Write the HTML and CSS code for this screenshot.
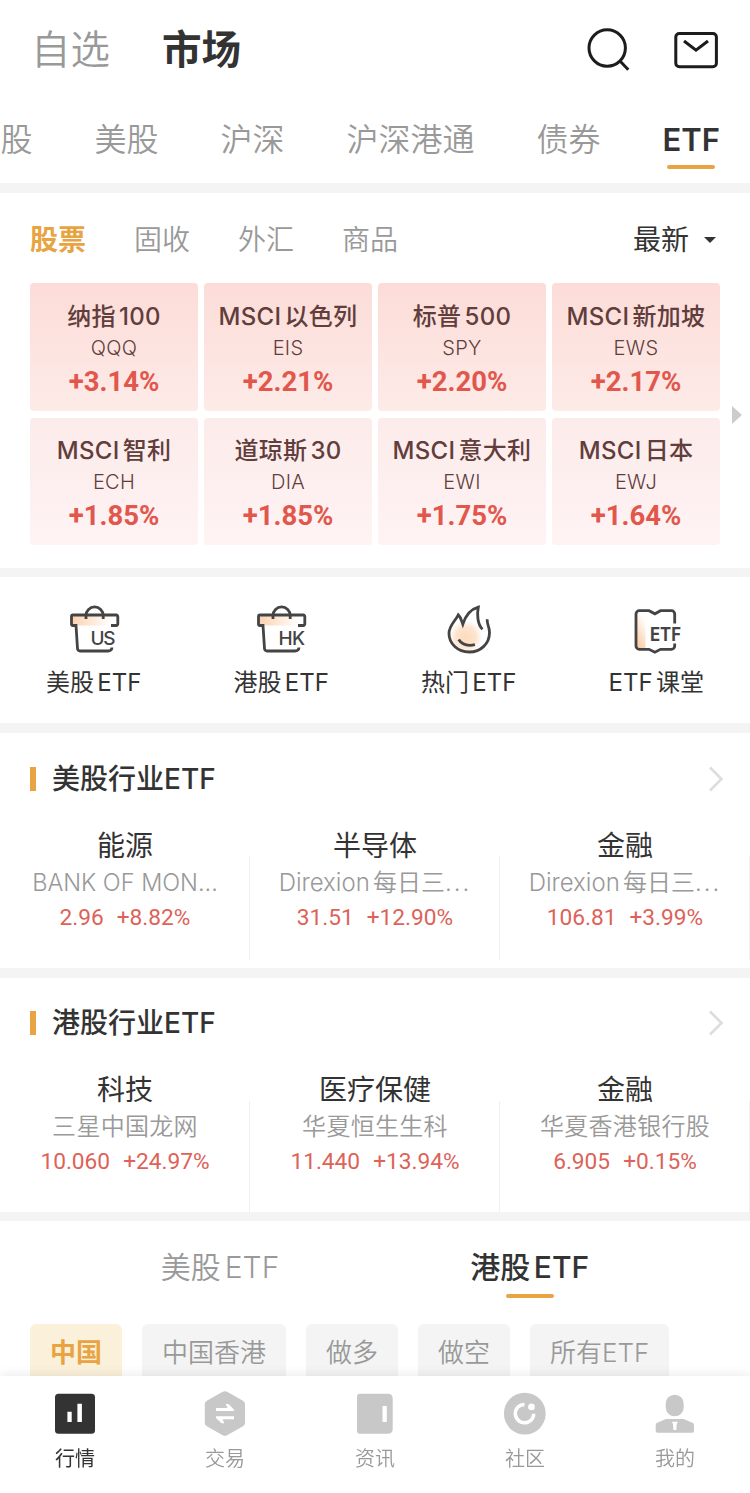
FILE: index.html
```html
<!DOCTYPE html>
<html lang="zh-CN">
<head>
  <meta charset="UTF-8">
  <meta name="viewport" content="width=device-width, initial-scale=1.0">
  <title>市场 - ETF</title>
  <link rel="stylesheet" href="styles.css">
</head>
<body>
  <div class="app">
    <header class="header">
      <div class="header-titles">
        <span class="header-title">自选</span>
        <span class="header-title active">市场</span>
      </div>
      <div class="header-icons">
        <svg width="46" height="46" viewBox="0 0 46 46" fill="none" stroke="#1c1c1c" stroke-width="3">
          <circle cx="22.2" cy="21" r="18.2"/>
          <path d="M34.5 33.5L43.3 42.7"/>
        </svg>
        <svg width="46" height="46" viewBox="0 0 46 46" fill="none" stroke="#1c1c1c" stroke-width="3">
          <rect x="2.8" y="6.5" width="40.6" height="33.2" rx="3.5"/>
          <path d="M11 14L23 23.2L35 14"/>
        </svg>
      </div>
    </header>

    <nav class="market-tabs">
      <span class="market-tab">股</span>
      <span class="market-tab">美股</span>
      <span class="market-tab">沪深</span>
      <span class="market-tab">沪深港通</span>
      <span class="market-tab">债券</span>
      <span class="market-tab active">ETF</span>
    </nav>

    <section class="heatmap">
      <div class="filters">
        <span class="filter active">股票</span>
        <span class="filter">固收</span>
        <span class="filter">外汇</span>
        <span class="filter">商品</span>
        <span class="sort">最新<i class="caret"></i></span>
      </div>
      <div class="tiles">
        <div class="tile hot"><div class="tile-name">纳指 100</div><div class="tile-code">QQQ</div><div class="tile-change">+3.14%</div></div>
        <div class="tile hot"><div class="tile-name">MSCI 以色列</div><div class="tile-code">EIS</div><div class="tile-change">+2.21%</div></div>
        <div class="tile hot"><div class="tile-name">标普 500</div><div class="tile-code">SPY</div><div class="tile-change">+2.20%</div></div>
        <div class="tile hot"><div class="tile-name">MSCI 新加坡</div><div class="tile-code">EWS</div><div class="tile-change">+2.17%</div></div>
        <div class="tile"><div class="tile-name">MSCI 智利</div><div class="tile-code">ECH</div><div class="tile-change">+1.85%</div></div>
        <div class="tile"><div class="tile-name">道琼斯 30</div><div class="tile-code">DIA</div><div class="tile-change">+1.85%</div></div>
        <div class="tile"><div class="tile-name">MSCI 意大利</div><div class="tile-code">EWI</div><div class="tile-change">+1.75%</div></div>
        <div class="tile"><div class="tile-name">MSCI 日本</div><div class="tile-code">EWJ</div><div class="tile-change">+1.64%</div></div>
      </div>
      <i class="next-page"></i>
    </section>

    <section class="shortcuts">
      <div class="shortcut">
        <svg width="52" height="52" viewBox="0 0 52 52" fill="none" stroke="#444" stroke-width="2.8">
          <defs>
            <linearGradient id="rim"><stop offset="0" stop-color="#fcd2b0"/><stop offset="1" stop-color="#fff"/></linearGradient>
          </defs>
          <path d="M4 12h40v9.500h-40z" fill="url(#rim)" stroke="none"/>
          <path d="M43 21.500h5.300a1.500 1.500 0 0 0 1.500-1.500v-7.500a1.500 1.500 0 0 0-1.500-1.500H5a1.500 1.500 0 0 0-1.500 1.500V20a1.500 1.500 0 0 0 1.500 1.500h3L9.500 44.500a2.500 2.500 0 0 0 2.500 2.500H40c2.500 0 3.800-1.200 4-3.500"/>
          <path d="M18 15v-3.500a8.600 8.600 0 0 1 17.200 0V15"/>
          <text class="icon-text" x="22.500" y="40.500" textLength="25">US</text>
        </svg>
        <span>美股 ETF</span>
      </div>
      <div class="shortcut">
        <svg width="52" height="52" viewBox="0 0 52 52" fill="none" stroke="#444" stroke-width="2.8">
          <path d="M4 12h40v9.500h-40z" fill="url(#rim)" stroke="none"/>
          <path d="M43 21.500h5.300a1.500 1.500 0 0 0 1.500-1.500v-7.500a1.500 1.500 0 0 0-1.500-1.500H5a1.500 1.500 0 0 0-1.500 1.500V20a1.500 1.500 0 0 0 1.500 1.500h3L9.500 44.500a2.500 2.500 0 0 0 2.500 2.500H40c2.500 0 3.800-1.200 4-3.500"/>
          <path d="M18 15v-3.500a8.600 8.600 0 0 1 17.200 0V15"/>
          <text class="icon-text" x="23.500" y="40.500" textLength="26.500">HK</text>
        </svg>
        <span>港股 ETF</span>
      </div>
      <div class="shortcut">
        <svg width="52" height="52" viewBox="0 0 52 52" fill="none" stroke="#444" stroke-width="2.8">
          <defs>
            <radialGradient id="glow" cx=".45" cy=".55"><stop offset="0" stop-color="#fcdcbe"/><stop offset=".6" stop-color="#fde4ce"/><stop offset="1" stop-color="#fff"/></radialGradient>
          </defs>
          <circle cx="24.500" cy="31.500" r="16.500" fill="url(#glow)" stroke="none"/>
          <path d="M44.300 15.300C43.500 20 46.500 22 46.500 28.500C46.500 39.500 38 48 26.300 48C14.500 48 6 39.500 6 29.500C6 21.500 12 17.500 15.300 10.800C18 13.500 18.500 16.500 19.800 20.200C22.500 12 27 5.500 35.300 3.200C33.800 10 34.500 20.500 39.500 25.300"/>
          <path d="M15.700 35.500C18.500 40 24.500 42.300 31.900 40.700"/>
        </svg>
        <span>热门 ETF</span>
      </div>
      <div class="shortcut">
        <svg width="52" height="52" viewBox="0 0 52 52" fill="none" stroke="#444" stroke-width="2.8">
          <defs>
            <linearGradient id="page" x1="0" y1="1" x2=".4" y2="0"><stop offset="0" stop-color="#fbc79b"/><stop offset="1" stop-color="#fff"/></linearGradient>
          </defs>
          <path d="M7 8h8.500v36h-8.500z" fill="url(#page)" stroke="none"/>
          <path d="M44.700 19.500V10a3.300 3.300 0 0 0-3.300-3.300H30.500L24.900 9.800L19 6.700H9.300A3.300 3.300 0 0 0 6 10V42a3.300 3.300 0 0 0 3.300 3.300H19L24.900 48.200L30.500 45.300H41.400A3.300 3.300 0 0 0 44.700 42V39.500"/>
          <text class="icon-text bold" x="20" y="36.800" textLength="31" lengthAdjust="spacingAndGlyphs">ETF</text>
        </svg>
        <span>ETF 课堂</span>
      </div>
    </section>

    <section class="sector">
      <div class="sector-head">
        <h2>美股行业ETF</h2>
        <svg width="16" height="26" viewBox="0 0 16 26" fill="none" stroke="#ddd" stroke-width="2.6"><path d="M2 1.500L13.500 13L2 24.500"/></svg>
      </div>
      <div class="sector-list">
        <div class="sector-item">
          <div class="sector-name">能源</div>
          <div class="sector-fund latin">BANK OF MON...</div>
          <div class="sector-price"><span>2.96</span><span>+8.82%</span></div>
        </div>
        <div class="sector-item">
          <div class="sector-name">半导体</div>
          <div class="sector-fund mixed">Direxion 每日三<span class="dots">...</span></div>
          <div class="sector-price"><span>31.51</span><span>+12.90%</span></div>
        </div>
        <div class="sector-item">
          <div class="sector-name">金融</div>
          <div class="sector-fund mixed">Direxion 每日三<span class="dots">...</span></div>
          <div class="sector-price"><span>106.81</span><span>+3.99%</span></div>
        </div>
      </div>
    </section>

    <section class="sector">
      <div class="sector-head">
        <h2>港股行业ETF</h2>
        <svg width="16" height="26" viewBox="0 0 16 26" fill="none" stroke="#ddd" stroke-width="2.6"><path d="M2 1.500L13.500 13L2 24.500"/></svg>
      </div>
      <div class="sector-list">
        <div class="sector-item">
          <div class="sector-name">科技</div>
          <div class="sector-fund">三星中国龙网</div>
          <div class="sector-price"><span>10.060</span><span>+24.97%</span></div>
        </div>
        <div class="sector-item">
          <div class="sector-name">医疗保健</div>
          <div class="sector-fund">华夏恒生生科</div>
          <div class="sector-price"><span>11.440</span><span>+13.94%</span></div>
        </div>
        <div class="sector-item">
          <div class="sector-name">金融</div>
          <div class="sector-fund">华夏香港银行股</div>
          <div class="sector-price"><span>6.905</span><span>+0.15%</span></div>
        </div>
      </div>
    </section>

    <section class="etf-list">
      <div class="etf-tabs">
        <span class="etf-tab">美股 ETF</span>
        <span class="etf-tab active">港股 ETF</span>
      </div>
      <div class="chips">
        <span class="chip active">中国</span>
        <span class="chip">中国香港</span>
        <span class="chip">做多</span>
        <span class="chip">做空</span>
        <span class="chip">所有ETF</span>
      </div>
    </section>

    <nav class="tabbar">
      <div class="tabbar-item active">
        <svg width="46" height="46" viewBox="0 0 46 46" fill="#333">
          <rect x="3" y="2.700" width="40" height="40" rx="3.500"/>
          <path d="M15.400 20.700h4.300V31h-4.300zM25.400 12.700h4.500V31h-4.500z" fill="#fff"/>
        </svg>
        <span>行情</span>
      </div>
      <div class="tabbar-item">
        <svg width="46" height="46" viewBox="0 0 46 46" fill="#c8c8c8">
          <path d="M20.700 .8Q22.900 -.5 25.100 .8L41 9.700Q43 10.900 43 13.200V31.800Q43 34.100 41 35.300L25.100 44.200Q22.900 45.500 20.700 44.200L4.800 35.300Q2.800 34.100 2.800 31.800V13.200Q2.800 10.900 4.800 9.700Z"/>
          <path d="M14 17h11.500l-1.800-4h2.800l5.500 5.500V20H14zM32 28.300H20.500l1.800 4h-2.800L14 27v-1.700h18z" fill="#fff"/>
        </svg>
        <span>交易</span>
      </div>
      <div class="tabbar-item">
        <svg width="46" height="46" viewBox="0 0 46 46" fill="#c8c8c8">
          <path d="M8 2.700H36q4.700 0 4.700 4.700V38q0 4.700-4.700 4.700H8q-3 0-3-3V5.700q0-3 3-3z"/>
          <path d="M30.500 15h4.300v16h-4.300z" fill="#fff"/>
        </svg>
        <span>资讯</span>
      </div>
      <div class="tabbar-item">
        <svg width="46" height="46" viewBox="0 0 46 46" fill="#c8c8c8">
          <circle cx="22.800" cy="22.600" r="20.900"/>
          <path d="M22.500 13.400A9.200 9.200 0 1 0 31.700 22.700" fill="none" stroke="#fff" stroke-width="3.500"/>
          <circle cx="29.500" cy="15.900" r="3.300" fill="#fff"/>
        </svg>
        <span>社区</span>
      </div>
      <div class="tabbar-item">
        <svg width="46" height="46" viewBox="0 0 46 46" fill="#c8c8c8">
          <rect x="13.700" y="3.700" width="18" height="21.600" rx="9"/>
          <path d="M14 28h17.500l9.500 4q1 .5 1 2v6q0 1.700-1.700 1.700H5.400Q3.700 41.700 3.700 40v-6q0-1.500 1-2z"/>
          <path d="M19.700 30.700h6.300l-1.300 2.300l-.4 6h-2.900l-.4-6z" fill="#fff"/>
        </svg>
        <span>我的</span>
      </div>
    </nav>
  </div>
</body>
</html>
```
FILE: styles.css
```css
* {
  box-sizing: border-box;
}

body {
  margin: 0;
  font-family: Inter, "Noto Sans CJK SC", sans-serif;
  color: #333;
  background-color: #fff;
  white-space: nowrap;
}

svg {
  display: block;
  flex: none;
}

.app {
  width: 750px;
  height: 1493px;
  overflow: hidden;
}

/* Header */
.header {
  display: flex;
  justify-content: space-between;
  height: 100px;
  padding: 20px 31px 0 31px;
}

.header-titles {
  display: flex;
  gap: 52px;
}

.header-title {
  font-size: 39.5px;
  line-height: 60px;
  color: #999;
  font-weight: 350;
}

.header-title.active {
  color: #333;
  font-weight: 700;
}

.header-icons {
  display: flex;
  gap: 42px;
  padding-top: 7px;
}

/* Market tabs */
.market-tabs {
  display: flex;
  justify-content: flex-end;
  gap: 62px;
  height: 93px;
  padding: 16px 30px 0 0;
  border-bottom: 10px solid #f4f4f4;
}

.market-tab {
  display: flex;
  flex-direction: column;
  align-items: center;
  font-size: 32px;
  line-height: 48px;
  color: #999;
  font-weight: 350;
}

.market-tab.active {
  font-size: 31px;
  color: #333;
  font-weight: 600;
}

.market-tab.active::after,
.etf-tab.active::after {
  content: "";
  width: 48px;
  height: 4px;
  border-radius: 2px;
  background-color: #e8a442;
}

.market-tab.active::after {
  margin-top: 1px;
}

/* Heatmap */
.heatmap {
  position: relative;
  height: 384px;
  padding: 23px 30px 0;
  border-bottom: 9px solid #f4f4f4;
}

.filters {
  display: flex;
  gap: 48px;
  height: 67px;
  font-size: 28px;
  line-height: 48px;
}

.filter {
  color: #999;
  font-weight: 350;
}

.filter.active {
  color: #e8a442;
  font-weight: 600;
}

.sort {
  display: flex;
  align-items: center;
  gap: 15px;
  height: 48px;
  margin-left: auto;
  padding-right: 4px;
}

.caret {
  border: 6px solid transparent;
  border-top-color: #333;
  border-bottom: 0;
}

.tiles {
  display: grid;
  grid-template-columns: repeat(4, 168px);
  gap: 7px 6px;
}

.tile {
  height: 127px;
  padding-top: 16px;
  border-radius: 4px;
  text-align: center;
  color: #613d3b;
  background: linear-gradient(#fcebeb, #fff3f3);
}

.tile.hot {
  height: 128px;
  padding-top: 17px;
  background: linear-gradient(#fcdcd8, #fdebe8);
}

.tile-name {
  font-size: 24px;
  line-height: 34px;
  font-weight: 500;
  word-spacing: -3.5px;
  letter-spacing: 0.3px;
}

.tile-code {
  font-size: 20px;
  line-height: 29px;
  font-weight: 350;
  letter-spacing: 0.3px;
}

.tile-change {
  font-family: Roboto, sans-serif;
  font-size: 27.5px;
  line-height: 37px;
  font-weight: 700;
  color: #e2574c;
}

.next-page {
  position: absolute;
  right: 8px;
  top: 213px;
  border: 9px solid transparent;
  border-left: 10px solid #ccc;
  border-right: 0;
}

/* Shortcuts */
.shortcuts {
  display: flex;
  height: 156px;
  padding-top: 27px;
  border-bottom: 10px solid #f4f4f4;
}

.shortcut {
  flex: 1;
  display: flex;
  flex-direction: column;
  align-items: center;
  gap: 9px;
  font-size: 24px;
  line-height: 36px;
  word-spacing: -3.5px;
}

.icon-text {
  font-family: Inter, sans-serif;
  font-size: 19px;
  font-weight: 500;
  fill: #444;
  stroke: none;
}

.icon-text.bold {
  font-weight: 700;
  font-size: 18.5px;
}

/* Sectors */
.sector {
  height: 245px;
  border-bottom: 10px solid #f4f4f4;
}

.sector + .sector {
  height: 243px;
  border-bottom-width: 9px;
}

.sector-head {
  display: flex;
  justify-content: space-between;
  align-items: center;
  height: 92px;
  padding: 0 26px 0 30px;
}

.sector + .sector .sector-head {
  height: 90px;
}

.sector-head h2 {
  display: flex;
  align-items: center;
  gap: 16px;
  margin: 0;
  font-size: 28px;
  line-height: 40px;
  font-weight: 500;
}

.sector-head h2::before {
  content: "";
  width: 6px;
  height: 24px;
  background-color: #e8a442;
}

.sector-list {
  display: flex;
}

.sector-item {
  flex: 1;
  height: 135px;
  padding-top: 1px;
  text-align: center;
  background: linear-gradient(#f0f0f0, #f0f0f0) right bottom / 1px 104px no-repeat;
}

.sector + .sector .sector-item {
  height: 144px;
  padding-top: 2px;
  background-size: 1px 111px;
}

.sector-name {
  font-size: 28px;
  line-height: 40px;
}

.sector-fund {
  font-size: 24px;
  line-height: 34px;
  font-weight: 350;
  color: #999;
  letter-spacing: 0.3px;
}

.sector-fund.latin {
  font-size: 23.5px;
  letter-spacing: 0;
}

.sector-fund.mixed {
  letter-spacing: 0;
  word-spacing: -3.5px;
}

.dots {
  letter-spacing: 2px;
}

.sector-price {
  display: flex;
  justify-content: center;
  gap: 13px;
  font-family: Roboto, sans-serif;
  font-size: 22.7px;
  line-height: 35px;
  font-weight: 400;
  color: #dd6258;
}

/* ETF list */
.etf-tabs {
  display: flex;
  justify-content: center;
  gap: 191px;
  height: 103px;
  padding-top: 22px;
}

.etf-tab {
  display: flex;
  flex-direction: column;
  align-items: center;
  font-size: 30px;
  line-height: 48px;
  font-weight: 350;
  color: #999;
  word-spacing: -4.5px;
}

.etf-tab.active {
  color: #333;
  font-weight: 500;
}

.etf-tab.active::after {
  margin-top: 3px;
}

.chips {
  display: flex;
  gap: 20px;
  padding: 0 30px;
}

.chip {
  height: 60px;
  padding: 0 20px;
  border-radius: 6px;
  font-size: 26px;
  line-height: 57px;
  font-weight: 350;
  color: #999;
  background-color: #f4f4f4;
}

.chip.active {
  color: #e8a442;
  background-color: #fbf0da;
  font-weight: 600;
}

/* Bottom tab bar */
.tabbar {
  position: fixed;
  left: 0;
  bottom: 0;
  display: flex;
  width: 750px;
  height: 117px;
  padding-top: 15px;
  background-color: #fff;
  box-shadow: 0 -2px 10px rgba(0, 0, 0, 0.08);
}

.tabbar-item {
  flex: 1;
  display: flex;
  flex-direction: column;
  align-items: center;
  gap: 7px;
  font-size: 20px;
  line-height: 30px;
  font-weight: 350;
  color: #999;
}

.tabbar-item.active {
  color: #333;
  font-weight: 400;
}
```
